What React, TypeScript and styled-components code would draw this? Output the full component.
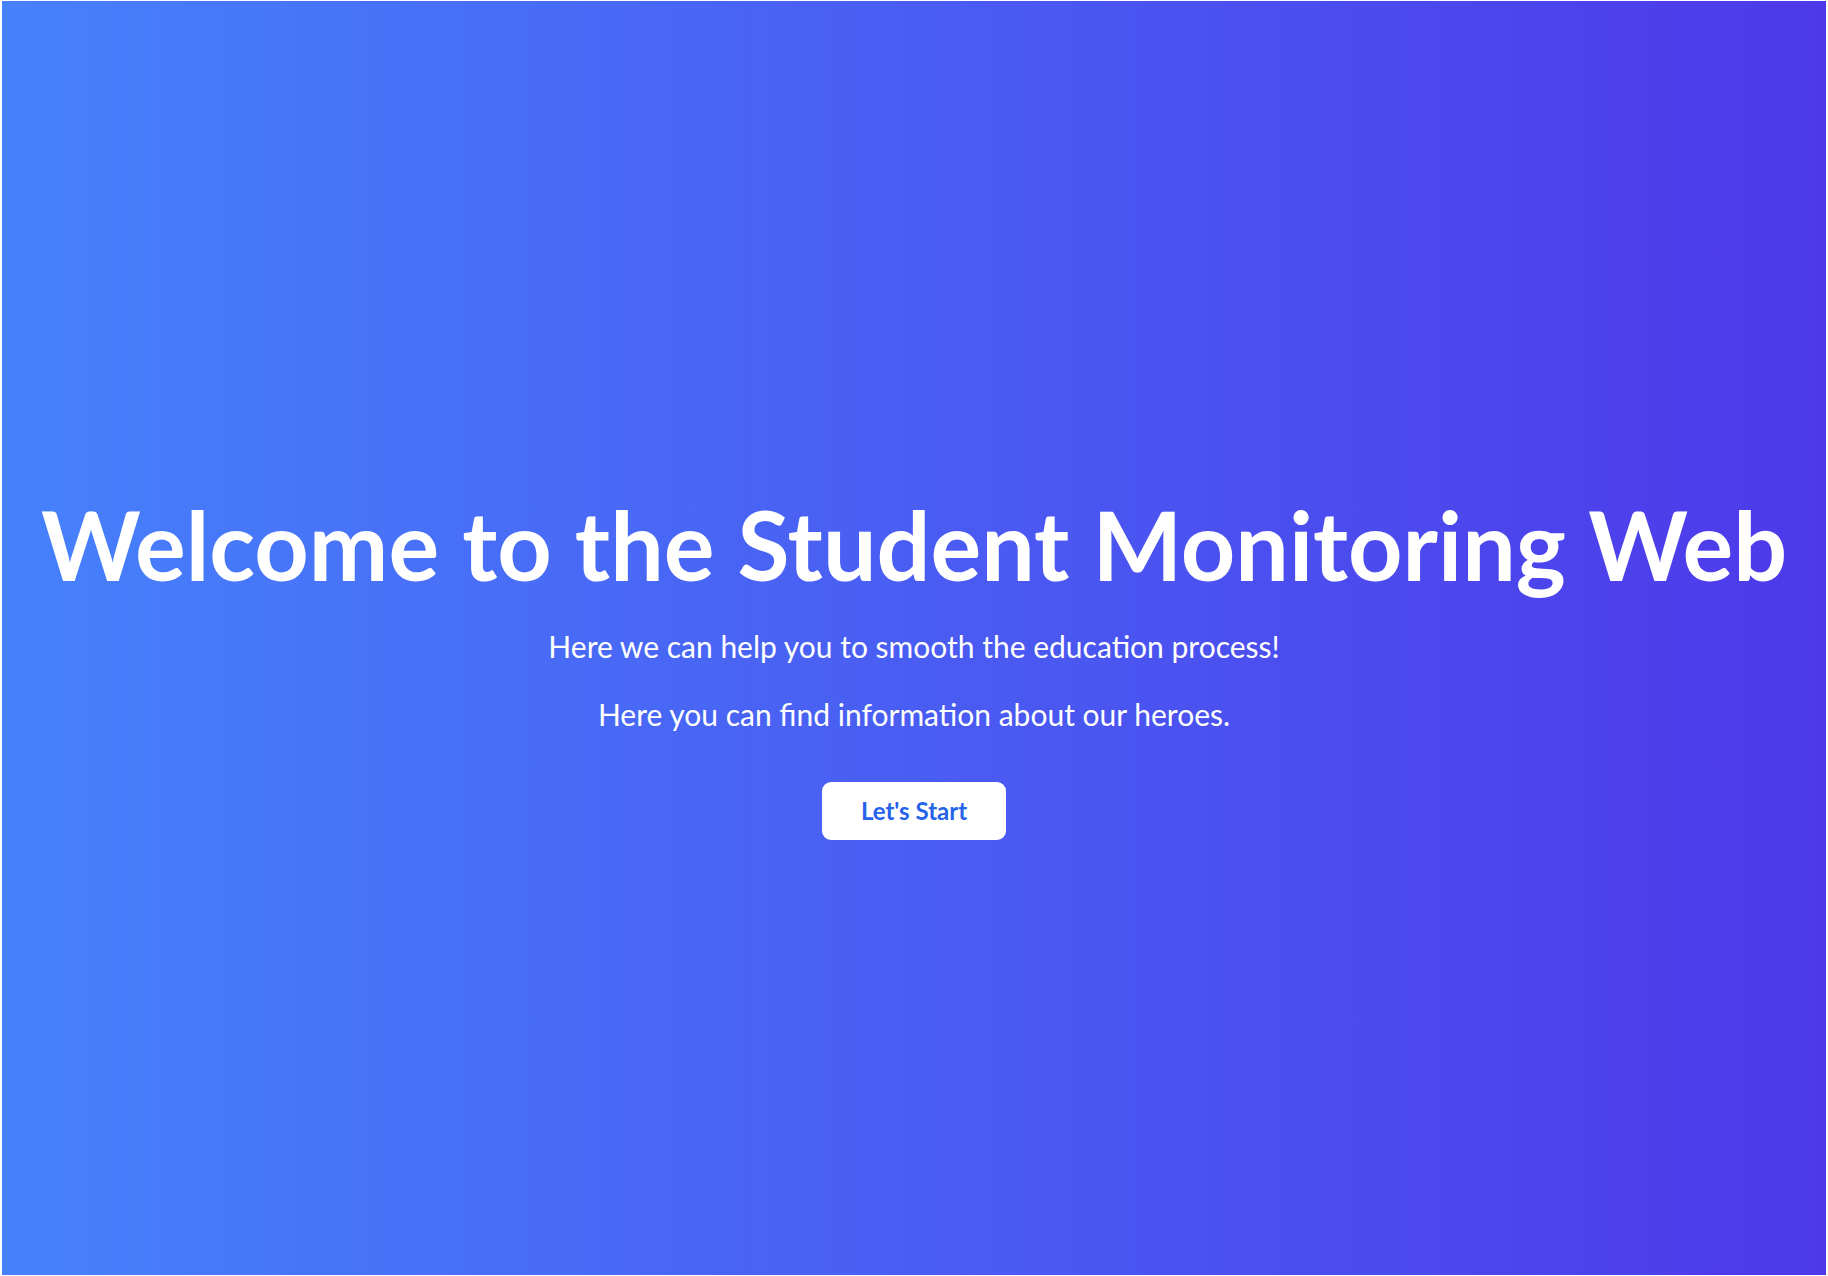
import React from "react";
import styled, { createGlobalStyle } from "styled-components";

const Global = createGlobalStyle`
  html, body { margin: 0; padding: 0; background: #ffffff; }
  body { padding: 1px 2px 1px 2px; }
  * { box-sizing: border-box; }
`;

const Hero = styled.main`
  height: 1274px;
  padding-top: 60px;
  display: flex;
  flex-direction: column;
  align-items: center;
  justify-content: center;
  background: linear-gradient(to right, #4681fc, #4d39e9);
  color: #ffffff;
  font-family: Lato, "Noto Sans", sans-serif;
  text-align: center;
`;

const Title = styled.h1`
  margin: 0 0 34px;
  font-size: 95px;
  line-height: 1;
  font-weight: 700;
  white-space: nowrap;
`;

const Lead = styled.p`
  margin: 0 0 28px;
  font-size: 30px;
  line-height: 1.35;
  font-weight: 400;
`;

const StartButton = styled.button`
  margin-top: 19px;
  width: 184px;
  height: 58px;
  border: none;
  border-radius: 9px;
  background: #ffffff;
  color: #2563eb;
  font-family: Lato, "Noto Sans", sans-serif;
  font-size: 24px;
  font-weight: 700;
  cursor: pointer;
`;

export default function App() {
  return (
    <>
      <Global />
      <Hero>
        <Title>Welcome to the Student Monitoring Web</Title>
        <Lead>Here we can help you to smooth the education process!</Lead>
        <Lead>Here you can find information about our heroes.</Lead>
        <StartButton>Let's Start</StartButton>
      </Hero>
    </>
  );
}
